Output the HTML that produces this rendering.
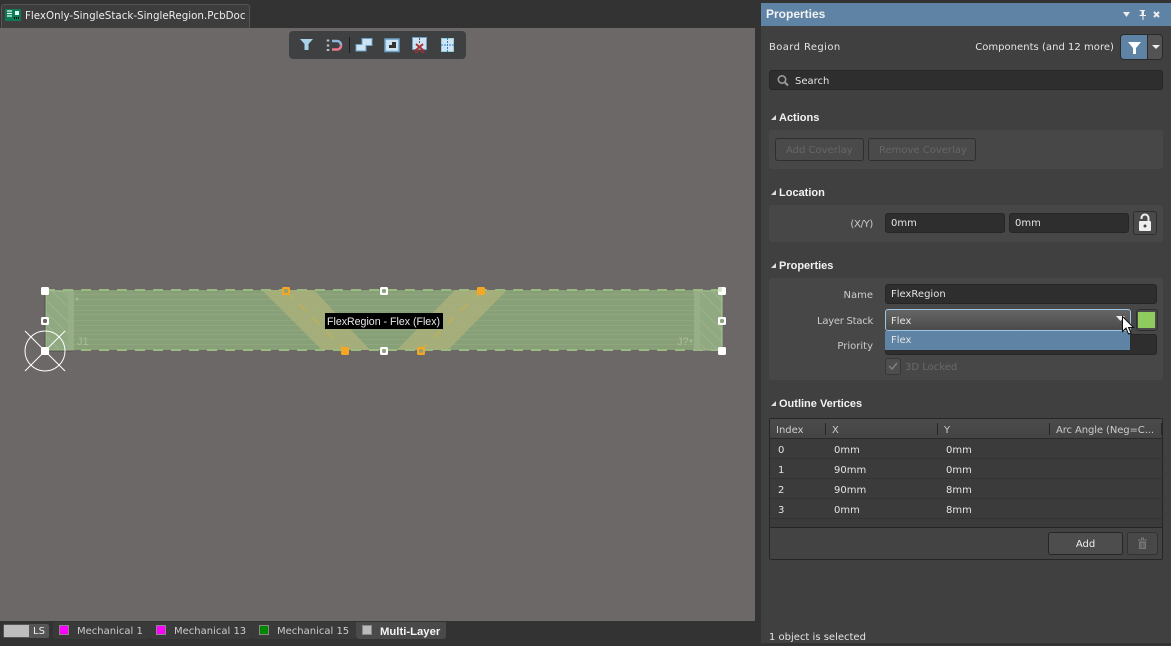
<!DOCTYPE html>
<html><head><meta charset="utf-8"><style>
html,body{margin:0;padding:0;width:1171px;height:646px;overflow:hidden;background:#333;font-family:"DejaVu Sans","Liberation Sans",sans-serif;font-size:10px;color:#e4e4e4}
div,span{position:absolute;box-sizing:border-box;white-space:nowrap}
.t{line-height:14px;height:14px}
.h{font-weight:bold;color:#f2f2f2;font-family:"Liberation Sans",sans-serif;font-size:11px}
.tri{width:0;height:0;border-left:5px solid transparent;border-bottom:5px solid #ddd}
.box{left:769px;width:394px;background:#474747;border-radius:3px}
.inp{background:#2e2e2e;border:1px solid #262626;border-radius:3px;height:20px}
.r{text-align:right;left:769px;width:104px}
.sw{width:10px;height:10px;border:1px solid #888;top:625px}
.hd rect{rx:1.5px}
</style></head><body>
<!-- top tab -->
<div style="left:1px;top:4px;width:249px;height:24px;background:#3d3d3d;border:1px solid #555;border-bottom:0;border-radius:3px 3px 0 0"></div>
<svg style="position:absolute;left:5px;top:9px" width="17" height="13"><rect width="16" height="12" y="0" fill="#0e7a58"/><rect x="10" y="2" width="4" height="4" fill="#dfe"/><path d="M2 2h5M2 4.500h5M2 7h5" stroke="#dfe" stroke-width="1.200"/><path d="M9 9h6" stroke="#111" stroke-width="2" stroke-dasharray="1 1"/></svg>
<div class="t" style="left:25px;top:9px;font-size:10.3px;color:#eee">FlexOnly-SingleStack-SingleRegion.PcbDoc</div>
<!-- canvas -->
<div style="left:0;top:28px;width:755px;height:593px;background:#6c6867"></div>
<!-- toolbar -->
<div style="left:289px;top:31px;width:177px;height:28px;background:#3f4041;border-radius:4px"></div>
<svg style="position:absolute;left:289px;top:31px" width="177" height="28">
<path d="M11 8h13l-4.500 5v6h-4v-6z" fill="#a9d3e8"/>
<path d="M39 8.500v2M39 13.500v2M39 18v2" stroke="#b5c4d0" stroke-width="2.500"/>
<path d="M43 10h5a4 4 0 0 1 4 4" fill="none" stroke="#8fb4dc" stroke-width="2.500"/>
<path d="M43 18.500h5a4 4 0 0 0 4-4.500" fill="none" stroke="#e8788c" stroke-width="2.500"/>
<rect x="60" y="6" width="1" height="16" fill="#1c1c1c"/>
<path d="M67 13.500h6v-6h10v7h-6v5.500h-10z" fill="#cfe4f2" stroke="#6ba0c8"/>
<rect x="96" y="8" width="14" height="12.500" fill="#cfe4f2" stroke="#6ba0c8" stroke-width="1.500"/>
<path d="M100 17v-3h3v-3h4v6z" fill="#333"/>
<rect x="123.500" y="6.500" width="14" height="12" fill="#cfe4f2" stroke="#6ba0c8"/>
<path d="M130.500 7v6" stroke="#555" stroke-dasharray="2 1"/>
<path d="M127 13l7 6M134 13l-7 6" stroke="#a33" stroke-width="2"/>
<circle cx="127.500" cy="20" r="1.500" fill="none" stroke="#a33"/><circle cx="133.500" cy="20" r="1.500" fill="none" stroke="#a33"/>
<rect x="152.500" y="7.500" width="12" height="13" fill="#cfe4f2" stroke="#9cc"/>
<path d="M152 14h5M165 14h-5M158.500 7v14" stroke="#2a80d0" stroke-dasharray="2 1"/>
</svg>
<!-- board -->
<svg style="position:absolute;left:0;top:270px" width="755" height="110" font-family="Liberation Sans">
<rect x="45" y="20" width="677" height="60" fill="#88a078"/>
<g fill="#90a680"><rect x="45" y="24" width="677" height="1"/><rect x="45" y="29" width="677" height="1"/><rect x="45" y="35" width="677" height="1"/><rect x="45" y="40" width="677" height="1"/><rect x="45" y="44" width="677" height="1"/><rect x="45" y="50" width="677" height="1"/><rect x="45" y="55" width="677" height="1"/><rect x="45" y="60" width="677" height="1"/><rect x="45" y="64" width="677" height="1"/><rect x="45" y="69" width="677" height="1"/><rect x="45" y="74" width="677" height="1"/></g>
<path d="M262 20h52l56 60h-48zM455 20h52l-59 60h-51z" fill="#a7af7b" fill-opacity=".95"/>
<path d="M45 20h678M45 80h678" stroke="#9aba80" stroke-width="2" stroke-dasharray="10 8"/>
<!-- left connector -->
<rect x="46" y="21" width="27" height="59" fill="#90a981" stroke="#a3bb91"/>
<path d="M46 30l22 22M46 42l22 22M46 54l22 22M52 21l16 16M62 21l6 6M46 66l13 13" stroke="#9db38d"/>
<rect x="68" y="21" width="5" height="59" fill="#98ae88"/>
<circle cx="77" cy="29" r="1.500" fill="#a3b893"/>
<text x="77" y="75" font-size="11" fill="#a9bc98">J1</text>
<!-- right connector -->
<rect x="695" y="21" width="27" height="59" fill="#90a981" stroke="#a3bb91"/>
<path d="M700 21l22 22M712 21l10 10M700 38l22 22M700 50l22 22M700 62l18 18M700 74l6 6" stroke="#9db38d"/>
<rect x="695" y="21" width="5" height="59" fill="#98ae88"/>
<circle cx="691" cy="71" r="1.500" fill="#a3b893"/>
<text x="677" y="75" font-size="11" fill="#a9bc98">J?</text>
<!-- dashed connectors -->
<path d="M286 21L345 80M481 21L421 80" stroke="#d2b13e" stroke-dasharray="9 10"/>
<!-- left edge -->
<path d="M45 21v60h28" stroke="#4e5048" fill="none"/>
<path d="M722 21v60" stroke="#aacc90" fill="none"/>
<!-- origin -->
<circle cx="45" cy="81" r="20" fill="none" stroke="#fff"/>
<path d="M25 61l40 40M65 61l-40 40" stroke="#fff"/>
<!-- handles -->
<g class="hd">
<rect x="41" y="17" width="8" height="8" fill="#fff"/>
<rect x="41" y="47" width="8" height="8" fill="#fff"/><rect x="43" y="49" width="4" height="4" fill="#6c6766"/>
<rect x="41" y="77" width="8" height="8" fill="#fff"/>
<rect x="380" y="17" width="8" height="8" fill="#fff"/><rect x="382" y="19" width="4" height="4" fill="#8ca57a"/>
<rect x="380" y="77" width="8" height="8" fill="#fff"/><rect x="382" y="79" width="4" height="4" fill="#8ca57a"/>
<rect x="718" y="17" width="8" height="8" fill="#fff"/><rect x="718" y="17" width="4" height="5" fill="#d8e8cc"/>
<rect x="718" y="47" width="8" height="8" fill="#fff"/><rect x="720" y="49" width="4" height="4" fill="#8ca57a"/>
<rect x="718" y="77" width="8" height="8" fill="#fff"/>
<rect x="282" y="17" width="8" height="8" fill="#f5a623"/><rect x="284" y="19" width="4" height="4" fill="#98a070"/>
<rect x="341" y="77" width="8" height="8" fill="#f5a623"/>
<rect x="477" y="17" width="8" height="8" fill="#f5a623"/>
<rect x="417" y="77" width="8" height="8" fill="#f5a623"/><rect x="419" y="79" width="4" height="4" fill="#98a070"/>
</g>
<rect x="325" y="43" width="118" height="16" fill="#000"/>
<text x="327" y="55" font-size="10.600" fill="#e8e8e8">FlexRegion - Flex (Flex)</text>
</svg>
<!-- layer tabs -->
<div style="left:0;top:621px;width:755px;height:25px;background:#333"></div>
<div style="left:3px;top:624px;width:46px;height:14px;background:#555;border-radius:2px"></div>
<div style="left:4px;top:625px;width:25px;height:12px;background:#bdbdbd"></div>
<div class="t" style="left:33px;top:625px;color:#eee">LS</div>
<div style="left:53px;top:622px;width:97px;height:17px;background:#3a3a3a;border-radius:0 0 3px 3px"></div>
<div style="left:150px;top:622px;width:103px;height:17px;background:#3a3a3a;border-radius:0 0 3px 3px"></div>
<div style="left:253px;top:622px;width:103px;height:17px;background:#3a3a3a;border-radius:0 0 3px 3px"></div>
<div style="left:356px;top:622px;width:90px;height:17px;background:#4a4a4a;border-radius:0 0 3px 3px"></div>
<div class="sw" style="left:59px;background:#f0f"></div>
<div class="sw" style="left:156px;background:#f0f"></div>
<div class="sw" style="left:259px;background:#080"></div>
<div class="sw" style="left:362px;background:#bbb"></div>
<div class="t" style="left:77px;top:625px;color:#ccc">Mechanical 1</div>
<div class="t" style="left:174px;top:625px;color:#ccc">Mechanical 13</div>
<div class="t" style="left:277px;top:625px;color:#ccc">Mechanical 15</div>
<div class="t" style="left:380px;top:625px;font-weight:bold;color:#f4f4f4;font-family:'Liberation Sans';font-size:11.300px">Multi-Layer</div>
<!-- panel -->
<div style="left:761px;top:3px;width:410px;height:640px;background:#404040"></div>
<div style="left:761px;top:3px;width:410px;height:23px;background:#5f83a5"></div>
<div class="t h" style="left:766px;top:7px;font-size:12px">Properties</div>
<svg style="position:absolute;left:1120px;top:8px" width="48" height="13"><path d="M3 4h7l-3.500 5z" fill="#eee"/><path d="M19 2h6v1h-1v4h2v1h-2.500v4h-1v-4h-3v-1h2v-4h-1z" fill="#eee"/><path d="M34 4l5 5M39 4l-5 5" stroke="#eee" stroke-width="2"/></svg>
<div class="t" style="left:769px;top:41px;letter-spacing:.4px">Board Region</div>
<div class="t" style="right:57px;top:41px;letter-spacing:.03px">Components (and 12 more)</div>
<div style="left:1120px;top:34px;width:28px;height:26px;background:#5f83a5;border:1px solid #2a2a2a;border-radius:4px 0 0 4px"></div>
<div style="left:1148px;top:34px;width:15px;height:26px;background:#535353;border:1px solid #2a2a2a;border-left:0;border-radius:0 4px 4px 0"></div>
<svg style="position:absolute;left:1120px;top:34px" width="43" height="26"><path d="M8 8h13l-5 6v6h-3v-6z" fill="#fff"/><path d="M32 11h8l-4 4z" fill="#eee"/></svg>
<div class="inp" style="left:769px;top:70px;width:394px"></div>
<svg style="position:absolute;left:776px;top:74px" width="14" height="13"><circle cx="6" cy="5.500" r="3.700" fill="none" stroke="#999" stroke-width="1.600"/><path d="M9 8.500l3 3" stroke="#999" stroke-width="2"/></svg>
<div class="t" style="left:795px;top:75px">Search</div>
<!-- actions -->
<div class="tri" style="left:771px;top:115px"></div>
<div class="t h" style="left:779px;top:111px">Actions</div>
<div class="box" style="top:130px;height:39px"></div>
<div style="left:775px;top:138px;width:89px;height:23px;border:1px solid #2f2f2f;border-radius:3px;background:#4a4a4a"></div>
<div style="left:868px;top:138px;width:108px;height:23px;border:1px solid #2f2f2f;border-radius:3px;background:#4a4a4a"></div>
<div class="t" style="left:786px;top:144px;color:#666">Add Coverlay</div>
<div class="t" style="left:879px;top:144px;color:#666">Remove Coverlay</div>
<!-- location -->
<div class="tri" style="left:771px;top:190px"></div>
<div class="t h" style="left:779px;top:186px">Location</div>
<div class="box" style="top:205px;height:37px"></div>
<div class="t r" style="top:218px;color:#ccc;letter-spacing:-.3px">(X/Y)</div>
<div class="inp" style="left:885px;top:213px;width:120px"></div>
<div class="inp" style="left:1009px;top:213px;width:120px"></div>
<div class="t" style="left:891px;top:217px">0mm</div>
<div class="t" style="left:1015px;top:217px">0mm</div>
<div style="left:1133px;top:211px;width:24px;height:24px;background:#4a4a4a;border:1px solid #2e2e2e;border-radius:3px"></div>
<svg style="position:absolute;left:1133px;top:211px" width="24" height="24"><rect x="6" y="10" width="12" height="10" rx="1" fill="#eee"/><path d="M8.500 8V7a3.500 3.500 0 0 1 7 0v3" fill="none" stroke="#eee" stroke-width="2"/><circle cx="12" cy="15" r="1.500" fill="#444"/></svg>
<!-- properties -->
<div class="tri" style="left:771px;top:263px"></div>
<div class="t h" style="left:779px;top:259px">Properties</div>
<div class="box" style="top:278px;height:102px"></div>
<div class="t r" style="top:289px;color:#ccc">Name</div>
<div class="inp" style="left:885px;top:284px;width:272px"></div>
<div class="t" style="left:891px;top:288px">FlexRegion</div>
<div class="t r" style="top:315px;color:#ccc;letter-spacing:-.25px">Layer Stack</div>
<div style="left:885px;top:309px;width:246px;height:22px;border:1px solid #9cc4e4;border-radius:3px;background:linear-gradient(#666,#4a4a4a)"></div>
<div class="t" style="left:891px;top:315px">Flex</div>
<svg style="position:absolute;left:1115px;top:315px" width="12" height="8"><path d="M1 1h9l-4.500 5z" fill="#eee"/></svg>
<div style="left:1136px;top:309px;width:22px;height:22px;background:#4a4a4a;border:1px solid #2e2e2e;border-radius:4px"></div>
<div style="left:1138px;top:312px;width:17px;height:16px;background:#8fcc60"></div>
<div class="t r" style="top:340px;color:#ccc">Priority</div>
<div class="inp" style="left:885px;top:334px;width:272px;height:21px"></div>
<div style="left:885px;top:331px;width:246px;height:20px;background:#5f83a5;border-bottom:1px solid #2c2c2c;border-right:1px solid #2c2c2c"></div>
<div class="t" style="left:891px;top:334px">Flex</div>
<svg style="position:absolute;left:1120px;top:315px" width="16" height="24"><path d="M2.500 1.500v15l3.500-3.500 2.500 6 2.500-1-2.500-5.500h5z" fill="#fff" stroke="#111"/></svg>
<div style="left:885px;top:358px;width:16px;height:17px;background:#4e4e4e;border:1px solid #373737;border-radius:3px"></div>
<svg style="position:absolute;left:885px;top:358px" width="16" height="17"><path d="M4 8l3 3 5-6" fill="none" stroke="#808080" stroke-width="1.500"/></svg>
<div class="t" style="left:905px;top:361px;color:#6a6a6a">3D Locked</div>
<!-- outline vertices -->
<div class="tri" style="left:771px;top:401px"></div>
<div class="t h" style="left:779px;top:397px">Outline Vertices</div>
<div style="left:769px;top:418px;width:394px;height:142px;background:#3b3b3b;border:1px solid #262626;border-radius:2px"></div>
<div style="left:770px;top:419px;width:392px;height:20px;background:linear-gradient(#4b4b4b,#444);border-bottom:1px solid #2a2a2a"></div>
<div style="left:825px;top:423px;width:1px;height:12px;background:#262626"></div>
<div style="left:937px;top:423px;width:1px;height:12px;background:#262626"></div>
<div style="left:1049px;top:423px;width:1px;height:12px;background:#262626"></div>
<div style="left:1161px;top:423px;width:1px;height:12px;background:#262626"></div>
<div class="t" style="left:776px;top:424px;color:#ccc">Index</div>
<div class="t" style="left:832px;top:424px;color:#ccc">X</div>
<div class="t" style="left:944px;top:424px;color:#ccc">Y</div>
<div class="t" style="left:1056px;top:424px;color:#ccc;letter-spacing:-.1px">Arc Angle (Neg=C...</div>
<div style="left:770px;top:458px;width:392px;height:1px;background:#333"></div>
<div style="left:770px;top:478px;width:392px;height:1px;background:#333"></div>
<div style="left:770px;top:498px;width:392px;height:1px;background:#333"></div>
<div style="left:770px;top:518px;width:392px;height:1px;background:#333"></div>
<div class="t" style="left:778px;top:444px">0</div><div class="t" style="left:834px;top:444px">0mm</div><div class="t" style="left:946px;top:444px">0mm</div>
<div class="t" style="left:778px;top:464px">1</div><div class="t" style="left:834px;top:464px">90mm</div><div class="t" style="left:946px;top:464px">0mm</div>
<div class="t" style="left:778px;top:484px">2</div><div class="t" style="left:834px;top:484px">90mm</div><div class="t" style="left:946px;top:484px">8mm</div>
<div class="t" style="left:778px;top:504px">3</div><div class="t" style="left:834px;top:504px">0mm</div><div class="t" style="left:946px;top:504px">8mm</div>
<div style="left:770px;top:527px;width:392px;height:32px;background:#434343;border-top:1px solid #262626"></div>
<div style="left:1048px;top:532px;width:75px;height:23px;background:#4d4d4d;border:1px solid #262626;border-radius:3px;text-align:center;line-height:24px;color:#eee">Add</div>
<div style="left:1127px;top:532px;width:31px;height:23px;background:#484848;border:1px solid #333;border-radius:3px"></div>
<svg style="position:absolute;left:1137px;top:537px" width="12" height="13"><path d="M1 3h9M4.500 3V1h2v2" fill="none" stroke="#777"/><path d="M2 4.500h7v7.500h-7z" fill="#777"/><path d="M4 6v5M5.500 6v5M7 6v5" stroke="#484848" stroke-width=".7"/></svg>
<div class="t" style="left:769px;top:631px">1 object is selected</div>
</body></html>
